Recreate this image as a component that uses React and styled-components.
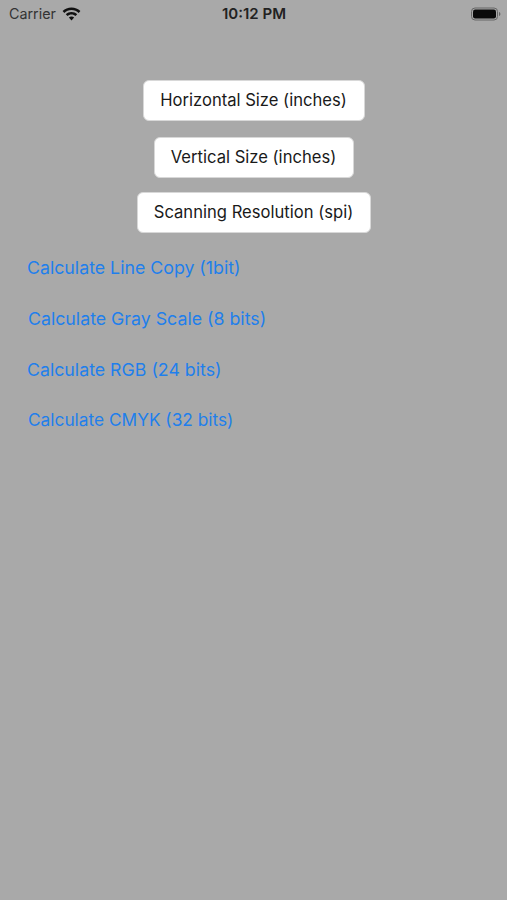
import styled, { createGlobalStyle } from "styled-components";

const GlobalStyle = createGlobalStyle`
  html, body {
    margin: 0;
    padding: 0;
  }
  body {
    background-color: #a9a9a9;
    font-family: Inter, "Liberation Sans", sans-serif;
  }
`;

function WifiIcon() {
  return (
    <svg width="19" height="14" viewBox="0 0 19 14">
      <path d="M9.5 0.5C6 0.5 2.9 1.9 0.6 4.1L2.3 5.9C4.2 4.1 6.7 3 9.5 3s5.3 1.1 7.2 2.9l1.7-1.8C16.1 1.9 13 0.5 9.5 0.5z" fill="#111" />
      <path d="M9.5 5C7.3 5 5.3 5.9 3.8 7.3l1.7 1.8C6.5 8.1 7.9 7.5 9.5 7.5s3 .6 4 1.6l1.7-1.8C13.7 5.9 11.7 5 9.5 5z" fill="#111" />
      <path d="M9.5 9.4c-1 0-1.9.4-2.6 1.1l2.6 2.9 2.6-2.9c-.7-.7-1.6-1.1-2.6-1.1z" fill="#111" />
    </svg>
  );
}

function BatteryIcon() {
  return (
    <svg width="30" height="14" viewBox="0 0 30 14">
      <rect x="0.5" y="1" width="26" height="12" rx="3.5" fill="none" stroke="#666" strokeWidth="1" />
      <rect x="2" y="2.5" width="23" height="9" rx="2.2" fill="#0a0a0a" />
      <path d="M28 5v4c.8-.3 1.4-1.1 1.4-2s-.6-1.7-1.4-2z" fill="#666" />
    </svg>
  );
}

export default function App() {
  return (
    <Screen>
      <GlobalStyle />
      <StatusBar>
        <Signal>
          <Carrier>Carrier</Carrier>
          <WifiIcon />
        </Signal>
        <Clock>10:12 PM</Clock>
        <Battery>
          <BatteryIcon />
        </Battery>
      </StatusBar>
      <Inputs>
        <FieldButton $width={222}>Horizontal Size (inches)</FieldButton>
        <FieldButton $width={200} $top={16}>Vertical Size (inches)</FieldButton>
        <FieldButton $width={234} $top={14}>Scanning Resolution (spi)</FieldButton>
      </Inputs>
      <Actions>
        <ActionLink $left={27}>Calculate Line Copy (1bit)</ActionLink>
        <ActionLink $left={28} $top={31}>Calculate Gray Scale (8 bits)</ActionLink>
        <ActionLink $left={27} $top={31}>Calculate RGB (24 bits)</ActionLink>
        <ActionLink $left={28} $top={30} $tight>Calculate CMYK (32 bits)</ActionLink>
      </Actions>
    </Screen>
  );
}

//----- Styled Components

const Screen = styled.div`
  width: 507px;
  height: 900px;
  overflow: hidden;
  background-color: #a9a9a9;
`;

const StatusBar = styled.div`
  display: grid;
  grid-template-columns: 1fr auto 1fr;
  align-items: center;
  height: 27px;
  padding: 0 6px 0 9px;
`;

const Signal = styled.div`
  display: flex;
  align-items: center;
  gap: 6px;
`;

const Carrier = styled.span`
  font-size: 14.3px;
  color: #333333;
`;

const Clock = styled.span`
  font-size: 15px;
  font-weight: 600;
  color: #222222;
  margin-right: 2px;
`;

const Battery = styled.div`
  display: flex;
  justify-content: flex-end;
`;

const Inputs = styled.div`
  display: flex;
  flex-direction: column;
  align-items: center;
  padding-top: 53px;
`;

const FieldButton = styled.button`
  width: ${(props) => props.$width}px;
  height: 41px;
  margin-top: ${(props) => props.$top || 0}px;
  padding: 0 0 2px;
  border: 1px solid #d8d8d8;
  border-radius: 6px;
  background-color: #ffffff;
  color: #1a1a1a;
  font-family: Inter, "Liberation Sans", sans-serif;
  font-size: 16.6px;
`;

const Actions = styled.div`
  display: flex;
  flex-direction: column;
  padding-top: 25px;
`;

const ActionLink = styled.div`
  margin-left: ${(props) => props.$left}px;
  margin-top: ${(props) => props.$top || 0}px;
  height: 20px;
  line-height: 20px;
  color: #1f7fec;
  font-size: ${(props) => (props.$tight ? "17.3px" : "17.75px")};
`;
